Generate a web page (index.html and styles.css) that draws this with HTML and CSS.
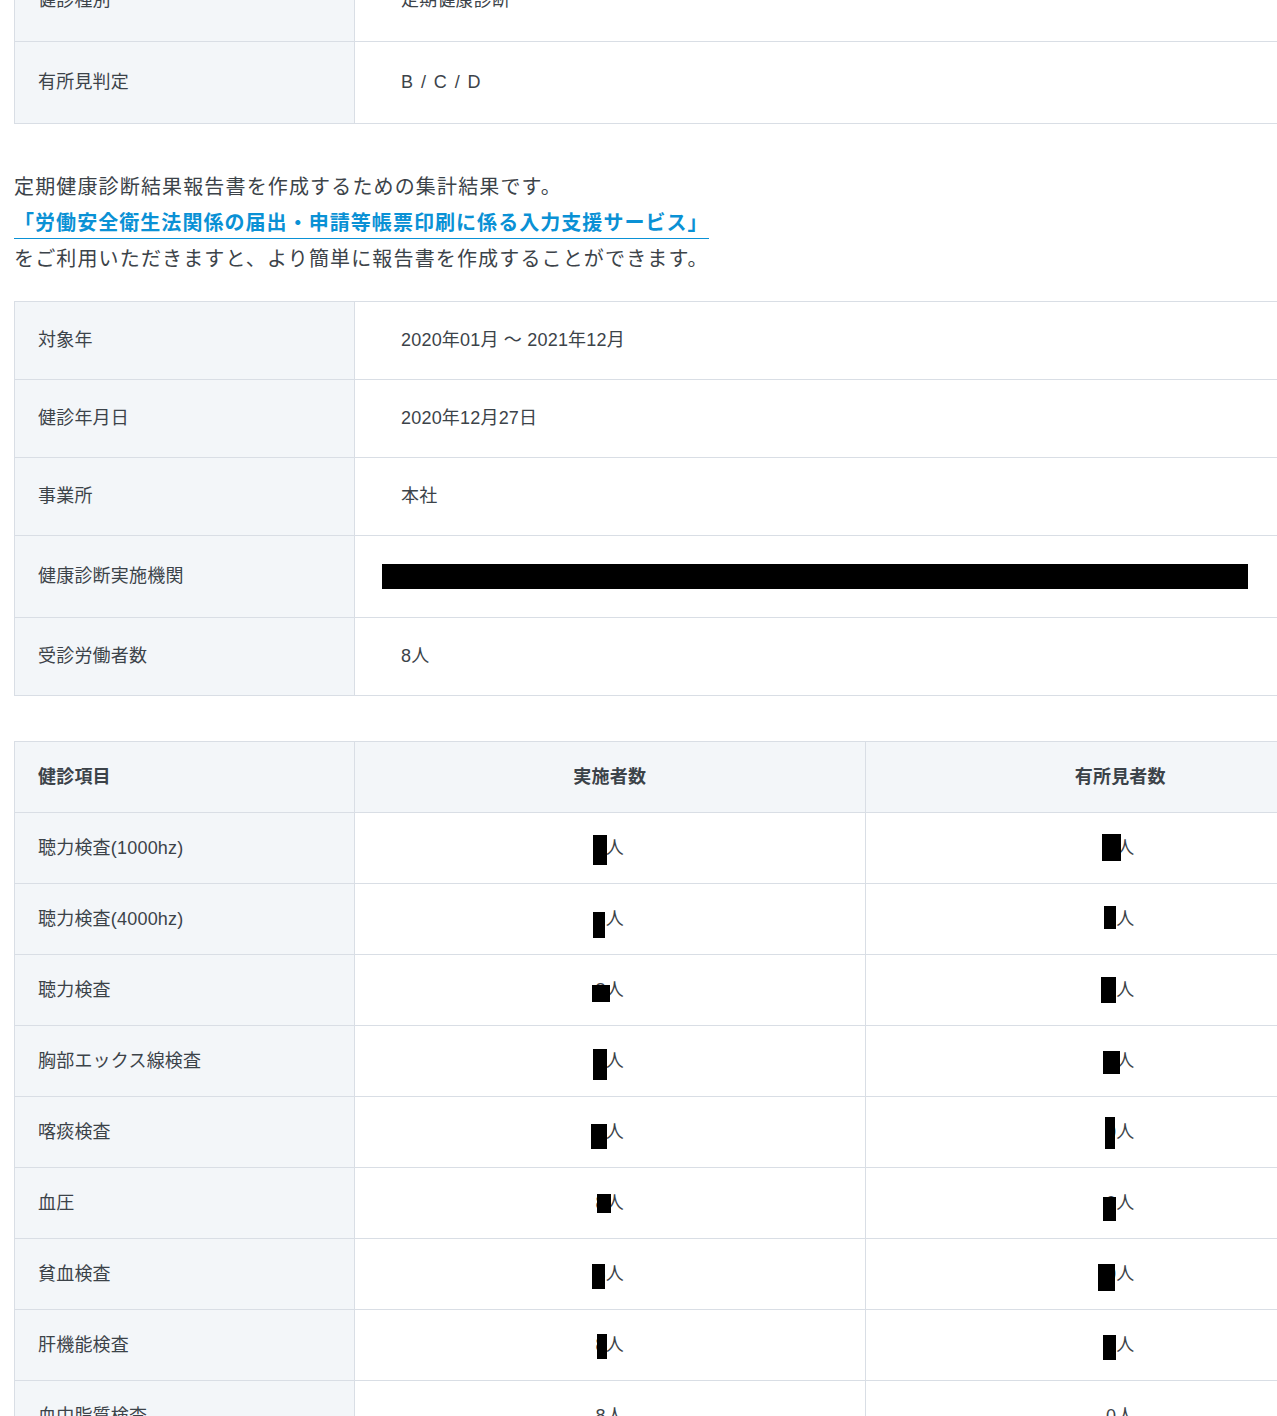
FILE: index.html
```html
<!DOCTYPE html>
<html lang="ja">

<head>
    <meta charset="UTF-8">
    <meta name="viewport" content="width=device-width, initial-scale=1.0">
    <title>定期健康診断結果 集計</title>
    <link rel="stylesheet" href="styles.css">
</head>

<body>

    <div class="page">

        <table class="info-table info-table--top">
            <tr>
                <th>健診種別</th>
                <td>定期健康診断</td>
            </tr>
            <tr>
                <th>有所見判定</th>
                <td class="grade">B / C / D</td>
            </tr>
        </table>

        <p class="note">
            定期健康診断結果報告書を作成するための集計結果です。<br>
            <a class="note-link" href="#">「労働安全衛生法関係の届出・申請等帳票印刷に係る入力支援サービス」</a><br>
            をご利用いただきますと、より簡単に報告書を作成することができます。
        </p>

        <table class="info-table">
            <tr>
                <th>対象年</th>
                <td>2020年01月 ～ 2021年12月</td>
            </tr>
            <tr>
                <th>健診年月日</th>
                <td>2020年12月27日</td>
            </tr>
            <tr>
                <th>事業所</th>
                <td>本社</td>
            </tr>
            <tr>
                <th>健康診断実施機関</th>
                <td class="masked"><span class="masked-bar"></span></td>
            </tr>
            <tr>
                <th>受診労働者数</th>
                <td>8人</td>
            </tr>
        </table>

        <table class="count-table">
            <thead>
                <tr>
                    <th>健診項目</th>
                    <th>実施者数</th>
                    <th>有所見者数</th>
                </tr>
            </thead>
            <tbody>
                <tr>
                    <th>聴力検査(1000hz)</th>
                    <td>8人<span class="redact" style="left:calc(50% - 17px);top:22px;width:14px;height:30px"></span></td>
                    <td>0人<span class="redact" style="left:calc(50% - 18px);top:21px;width:19px;height:27px"></span></td>
                </tr>
                <tr>
                    <th>聴力検査(4000hz)</th>
                    <td>8人<span class="redact" style="left:calc(50% - 17px);top:28px;width:12px;height:26px"></span></td>
                    <td>0人<span class="redact" style="left:calc(50% - 16px);top:22px;width:12px;height:23px"></span></td>
                </tr>
                <tr>
                    <th>聴力検査</th>
                    <td>8人<span class="redact" style="left:calc(50% - 18px);top:30px;width:18px;height:17px"></span></td>
                    <td>0人<span class="redact" style="left:calc(50% - 19px);top:22px;width:15px;height:26px"></span></td>
                </tr>
                <tr>
                    <th>胸部エックス線検査</th>
                    <td>8人<span class="redact" style="left:calc(50% - 17px);top:23px;width:14px;height:31px"></span></td>
                    <td>0人<span class="redact" style="left:calc(50% - 17px);top:25px;width:17px;height:23px"></span></td>
                </tr>
                <tr>
                    <th>喀痰検査</th>
                    <td>8人<span class="redact" style="left:calc(50% - 19px);top:27px;width:16px;height:25px"></span></td>
                    <td>0人<span class="redact" style="left:calc(50% - 15px);top:20px;width:10px;height:32px"></span></td>
                </tr>
                <tr>
                    <th>血圧</th>
                    <td>8人<span class="redact" style="left:calc(50% - 13px);top:26px;width:14px;height:19px"></span></td>
                    <td>0人<span class="redact" style="left:calc(50% - 17px);top:29px;width:13px;height:24px"></span></td>
                </tr>
                <tr>
                    <th>貧血検査</th>
                    <td>8人<span class="redact" style="left:calc(50% - 18px);top:25px;width:13px;height:25px"></span></td>
                    <td>0人<span class="redact" style="left:calc(50% - 22px);top:25px;width:17px;height:27px"></span></td>
                </tr>
                <tr>
                    <th>肝機能検査</th>
                    <td>8人<span class="redact" style="left:calc(50% - 13px);top:24px;width:10px;height:25px"></span></td>
                    <td>0人<span class="redact" style="left:calc(50% - 17px);top:25px;width:13px;height:25px"></span></td>
                </tr>
                <tr>
                    <th>血中脂質検査</th>
                    <td>8人</td>
                    <td>0人</td>
                </tr>
            </tbody>
        </table>

    </div>

</body>

</html>
```

FILE: styles.css
```css
html,
body {
    overflow: hidden;
}

body {
    font-family: "Liberation Sans", "Noto Sans CJK JP", sans-serif;
    color: #3c4349;
    background-color: #fff;
    margin: 0;
    padding: 0;
}

.page {
    width: 1362px;
    padding: 0 14px;
}

/* key / value tables */
.info-table {
    width: 100%;
    border-collapse: collapse;
    font-size: 18px;
    line-height: 21px;
    letter-spacing: 0.2px;
}

.info-table th,
.info-table td {
    border: 1px solid #d9dee5;
    text-align: left;
    vertical-align: middle;
}

.info-table th {
    width: 292px;
    font-weight: 400;
    background-color: #f3f6f9;
    padding: 28px 24px 28px 23px;
}

.info-table td {
    padding: 28px 46px;
}

.info-table--top {
    margin-top: -41px;
}

.info-table--top th,
.info-table--top td {
    padding-top: 30px;
    padding-bottom: 30px;
}

.grade {
    letter-spacing: 0.08em;
}

.info-table td.masked {
    padding-left: 27px;
}

.masked-bar {
    display: block;
    width: 866px;
    height: 25px;
    background-color: #000;
}

/* note between tables */
.note {
    font-size: 20px;
    letter-spacing: 1.15px;
    line-height: 36px;
    margin: 45px 0 24px;
}

.note-link {
    padding-bottom: 4px;
    color: #0a91d5;
    font-weight: 700;
    letter-spacing: 1.05px;
    text-decoration: none;
    border-bottom: 1px solid #0a91d5;
}

/* counts table */
.count-table {
    width: 100%;
    margin-top: 45px;
    border-collapse: collapse;
    table-layout: fixed;
    font-size: 18px;
    line-height: 24px;
    letter-spacing: 0.2px;
}

.count-table th,
.count-table td {
    border: 1px solid #d9dee5;
    padding: 23px 24px;
    vertical-align: middle;
}

.count-table th:first-child {
    width: 292px;
    padding-left: 23px;
}

.count-table thead th {
    background-color: #f3f6f9;
    font-weight: 700;
    text-align: center;
}

.count-table thead th:first-child {
    text-align: left;
}

.count-table tbody th {
    background-color: #f3f6f9;
    font-weight: 400;
    text-align: left;
}

.count-table td {
    position: relative;
    text-align: center;
}

.redact {
    position: absolute;
    background-color: #000;
}
```
